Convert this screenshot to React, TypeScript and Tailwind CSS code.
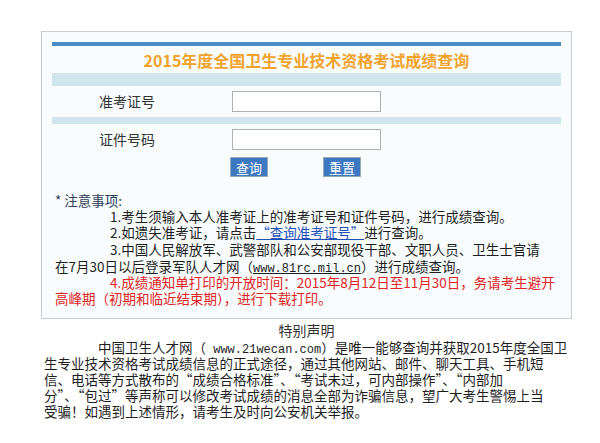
import React from 'react';

const Field: React.FC<{ label: string }> = ({ label }) => (
  <div className="flex h-[31px] items-center">
    <div className="w-[180px] pl-[47px] text-[14px] text-[#333]">{label}</div>
    <input
      type="text"
      className="h-[21px] w-[149px] border border-[#aeb1b4] bg-white outline-none"
    />
  </div>
);

const Line: React.FC<{ indent?: boolean; className?: string; children: React.ReactNode }> = ({
  indent,
  className = '',
  children,
}) => (
  <div className={`h-[16px] leading-[16px] whitespace-nowrap ${indent ? 'pl-[55px]' : ''} ${className}`}>
    {children}
  </div>
);

export default function App() {
  return (
    <div className="min-h-[443px] bg-white pt-[31px] font-['Noto_Sans_CJK_SC',sans-serif] text-[13.5px] text-[#1e1e1e]">
      <div className="ml-[41px] w-[531px]">
        <div className="border border-[#c9cdd0] bg-[#f8fcfd] px-[10px] pt-[10px] pb-[12px]">
          <div className="h-[4px] bg-[#4b8cc6]" />
          <div className="flex h-[27px] items-center justify-center text-[16px] font-bold leading-none text-[#f2a32c]">
            2015年度全国卫生专业技术资格考试成绩查询
          </div>
          <div className="h-[13px] bg-[#cfe5eb]" />
          <Field label="准考证号" />
          <div className="h-[7px] bg-[#cfe5eb]" />
          <Field label="证件号码" />
          <div className="mt-[1px] flex h-[22px] items-center">
            <button className="ml-[178px] h-[20px] w-[38px] border border-[#9aa9b8] bg-[#3d79c2] text-[13px] leading-none text-white">
              查询
            </button>
            <button className="ml-[55px] h-[20px] w-[38px] border border-[#9aa9b8] bg-[#3d79c2] text-[13px] leading-none text-white">
              重置
            </button>
          </div>
          <div className="mt-[14px] pl-[3px]">
            <Line className="text-[#2f3e5c]">* 注意事项:</Line>
            <Line indent>1.考生须输入本人准考证上的准考证号和证件号码，进行成绩查询。</Line>
            <Line indent>
              2.如遗失准考证，请点击
              <span className="text-[#1f4fb8] underline">“查询准考证号”</span>
              进行查询。
            </Line>
            <Line indent className="mt-[1px]">
              3.中国人民解放军、武警部队和公安部现役干部、文职人员、卫生士官请
            </Line>
            <Line className="mt-[1px]">
              在7月30日以后登录军队人才网（
              <span className="font-['Liberation_Mono',monospace] text-[12px] underline">www.81rc.mil.cn</span>
              ）进行成绩查询。
            </Line>
            <Line indent className="text-[#e02424]">
              4.成绩通知单打印的开放时间：2015年8月12日至11月30日，务请考生避开
            </Line>
            <Line className="text-[#e02424]">高峰期（初期和临近结束期），进行下载打印。</Line>
          </div>
        </div>
        <div className="mt-[3px] h-[17px] text-center text-[14px] leading-[17px] text-[#333]">特别声明</div>
        <div className="pl-[3px]">
          <Line className="pl-[54px]">
            中国卫生人才网（
            <span className="font-['Liberation_Mono',monospace] text-[12px]"> www.21wecan.com</span>
            ）是唯一能够查询并获取2015年度全国卫
          </Line>
          <Line>生专业技术资格考试成绩信息的正式途径，通过其他网站、邮件、聊天工具、手机短</Line>
          <Line>信、电话等方式散布的“成绩合格标准”、“考试未过，可内部操作”、“内部加</Line>
          <Line>分”、“包过”等声称可以修改考试成绩的消息全部为诈骗信息，望广大考生警惕上当</Line>
          <Line>受骗！如遇到上述情形，请考生及时向公安机关举报。</Line>
        </div>
      </div>
    </div>
  );
}
